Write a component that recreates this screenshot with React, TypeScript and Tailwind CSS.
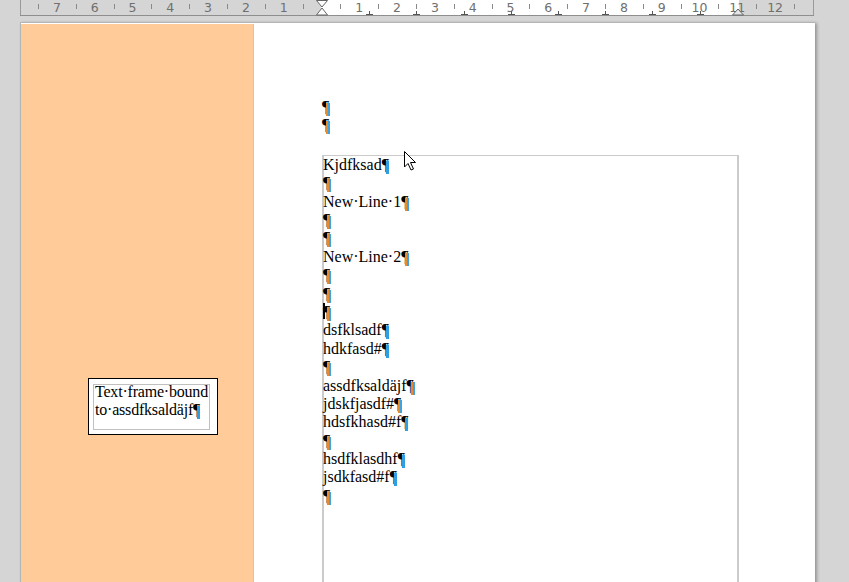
import React from "react";

const ZERO = 321.5;
const CM = 37.8;

function Ruler() {
  const nums: { x: number; label: string }[] = [];
  for (let n = 1; n <= 7; n++) nums.push({ x: ZERO - CM * n, label: String(n) });
  for (let n = 1; n <= 12; n++) nums.push({ x: ZERO + CM * n, label: String(n) });
  const ticks: number[] = [];
  for (let k = -8; k <= 13; k++) {
    const x = ZERO + CM / 2 + CM * k;
    if (x > 22 && x < 811) ticks.push(x);
  }
  const tabs: number[] = [];
  for (let k = 1; k <= 8; k++) tabs.push(322 + 47.2 * k);
  return (
    <svg width="849" height="16" className="block">
      <rect x="0" y="0" width="849" height="16" fill="#d5d5d5" />
      <rect x="321" y="0" width="418" height="15" fill="#ffffff" />
      <line x1="20.5" y1="0" x2="20.5" y2="15.5" stroke="#9a9a9a" />
      <line x1="813.5" y1="0" x2="813.5" y2="15.5" stroke="#9a9a9a" />
      <line x1="20" y1="15.5" x2="814" y2="15.5" stroke="#8e8e8e" />
      {ticks.map((x, i) => (
        <line key={i} x1={Math.round(x) + 0.5} y1="4" x2={Math.round(x) + 0.5} y2="9" stroke="#8a8a8a" />
      ))}
      {nums.map((n, i) => (
        <text
          key={i}
          x={n.x}
          y="12"
          textAnchor="middle"
          fontSize="12.5"
          fill="#6f6f6f"
          fontFamily="'DejaVu Sans', sans-serif"
        >
          {n.label}
        </text>
      ))}
      {tabs.map((x, i) => (
        <g key={i} stroke="#555555">
          <line x1={Math.round(x) + 0.5} y1="11" x2={Math.round(x) + 0.5} y2="15" />
          <line x1={Math.round(x) - 3} y1="14.5" x2={Math.round(x) + 4} y2="14.5" />
        </g>
      ))}
      <polygon points="316.5,0.5 327.5,0.5 322,7" fill="#ffffff" stroke="#666666" />
      <polygon points="322,8 316.5,15 327.5,15" fill="#ffffff" stroke="#666666" />
      <polygon points="738,9 732.5,15 743.5,15" fill="#e6e6e6" stroke="#666666" />
    </svg>
  );
}

function P({ v = "m" }: { v?: "m" | "b" }) {
  return (
    <span className="relative">
      ¶
      {v === "b" ? (
        <span className="absolute left-[4px] top-[5px] w-[3px] h-[13px] bg-[#2f9ee2]" />
      ) : (
        <>
          <span className="absolute left-[4px] top-[5px] w-[2px] h-[13px] bg-[#e8892a]" />
          <span className="absolute left-[6px] top-[5px] w-[2px] h-[13px] bg-[#3aa4e6]" />
        </>
      )}
    </span>
  );
}

type Line = { t: string; v?: "m" | "b"; caret?: boolean };

const lines: Line[] = [
  { t: "Kjdfksad", v: "b" },
  { t: "" },
  { t: "New·Line·1" },
  { t: "" },
  { t: "" },
  { t: "New·Line·2" },
  { t: "" },
  { t: "" },
  { t: "", caret: true },
  { t: "dsfklsadf", v: "b" },
  { t: "hdkfasd#", v: "b" },
  { t: "" },
  { t: "assdfksaldäjf" },
  { t: "jdskfjasdf#" },
  { t: "hdsfkhasd#f", v: "b" },
  { t: "" },
  { t: "hsdfklasdhf", v: "b" },
  { t: "jsdkfasd#f", v: "b" },
  { t: "" },
];

export default function App() {
  return (
    <div
      className="relative w-[849px] h-[582px] overflow-hidden bg-[#d5d5d5] text-black"
      style={{ fontFamily: "'Liberation Serif', 'Times New Roman', serif" }}
    >
      <Ruler />
      <div className="mt-[6px] ml-[20px] w-[795px] h-[600px] bg-white border-l border-t border-[#b4b4b4] shadow-[2px_1px_3px_rgba(0,0,0,0.3)] flex">
        {/* left orange margin column */}
        <div className="mt-[1px] w-[233px] bg-[#ffcb98] border-r border-[#c6c6c6] pl-[67px] pt-[354px]">
          <div className="w-[130px] h-[57px] border border-black bg-white pl-[4px] pt-[5px] pr-[7px] pb-[4px]">
            <div className="h-[46px] border border-[#c0c0c0] text-[16px] leading-[18px] pl-[1px] tracking-[-0.2px]">
              <div className="-mt-[2px] whitespace-nowrap">Text·frame·bound</div>
              <div className="whitespace-nowrap">
                to·assdfksaldäjf
                <P v="b" />
              </div>
            </div>
          </div>
        </div>
        {/* main text area */}
        <div className="flex-1 pl-[68px] pt-[75px] text-[16px] leading-[18.4px]">
          <div>
            <P />
          </div>
          <div>
            <P />
          </div>
          <div className="mt-[20px] w-[417px] h-[500px] border-t border-l-2 border-r-2 border-[#cbcbcb]">
            <div className="-ml-[1px]">
              {lines.map((l, i) => (
                <div key={i} className="relative h-[18.4px] whitespace-nowrap">
                  {l.caret && <span className="absolute left-0 top-0 w-[2px] h-[16px] bg-black" />}
                  {l.t}
                  <P v={l.v} />
                </div>
              ))}
            </div>
          </div>
        </div>
      </div>
      {/* mouse pointer */}
      <svg className="absolute left-[403px] top-[150px]" width="14" height="22" viewBox="0 0 14 22">
        <path
          d="M1.5 1.5 L1.5 17 L5 13.5 L8 20 L10.5 19 L7.5 12.5 L12.5 12.5 Z"
          fill="#ffffff"
          stroke="#000000"
          strokeWidth="1"
          strokeLinejoin="miter"
        />
      </svg>
    </div>
  );
}
